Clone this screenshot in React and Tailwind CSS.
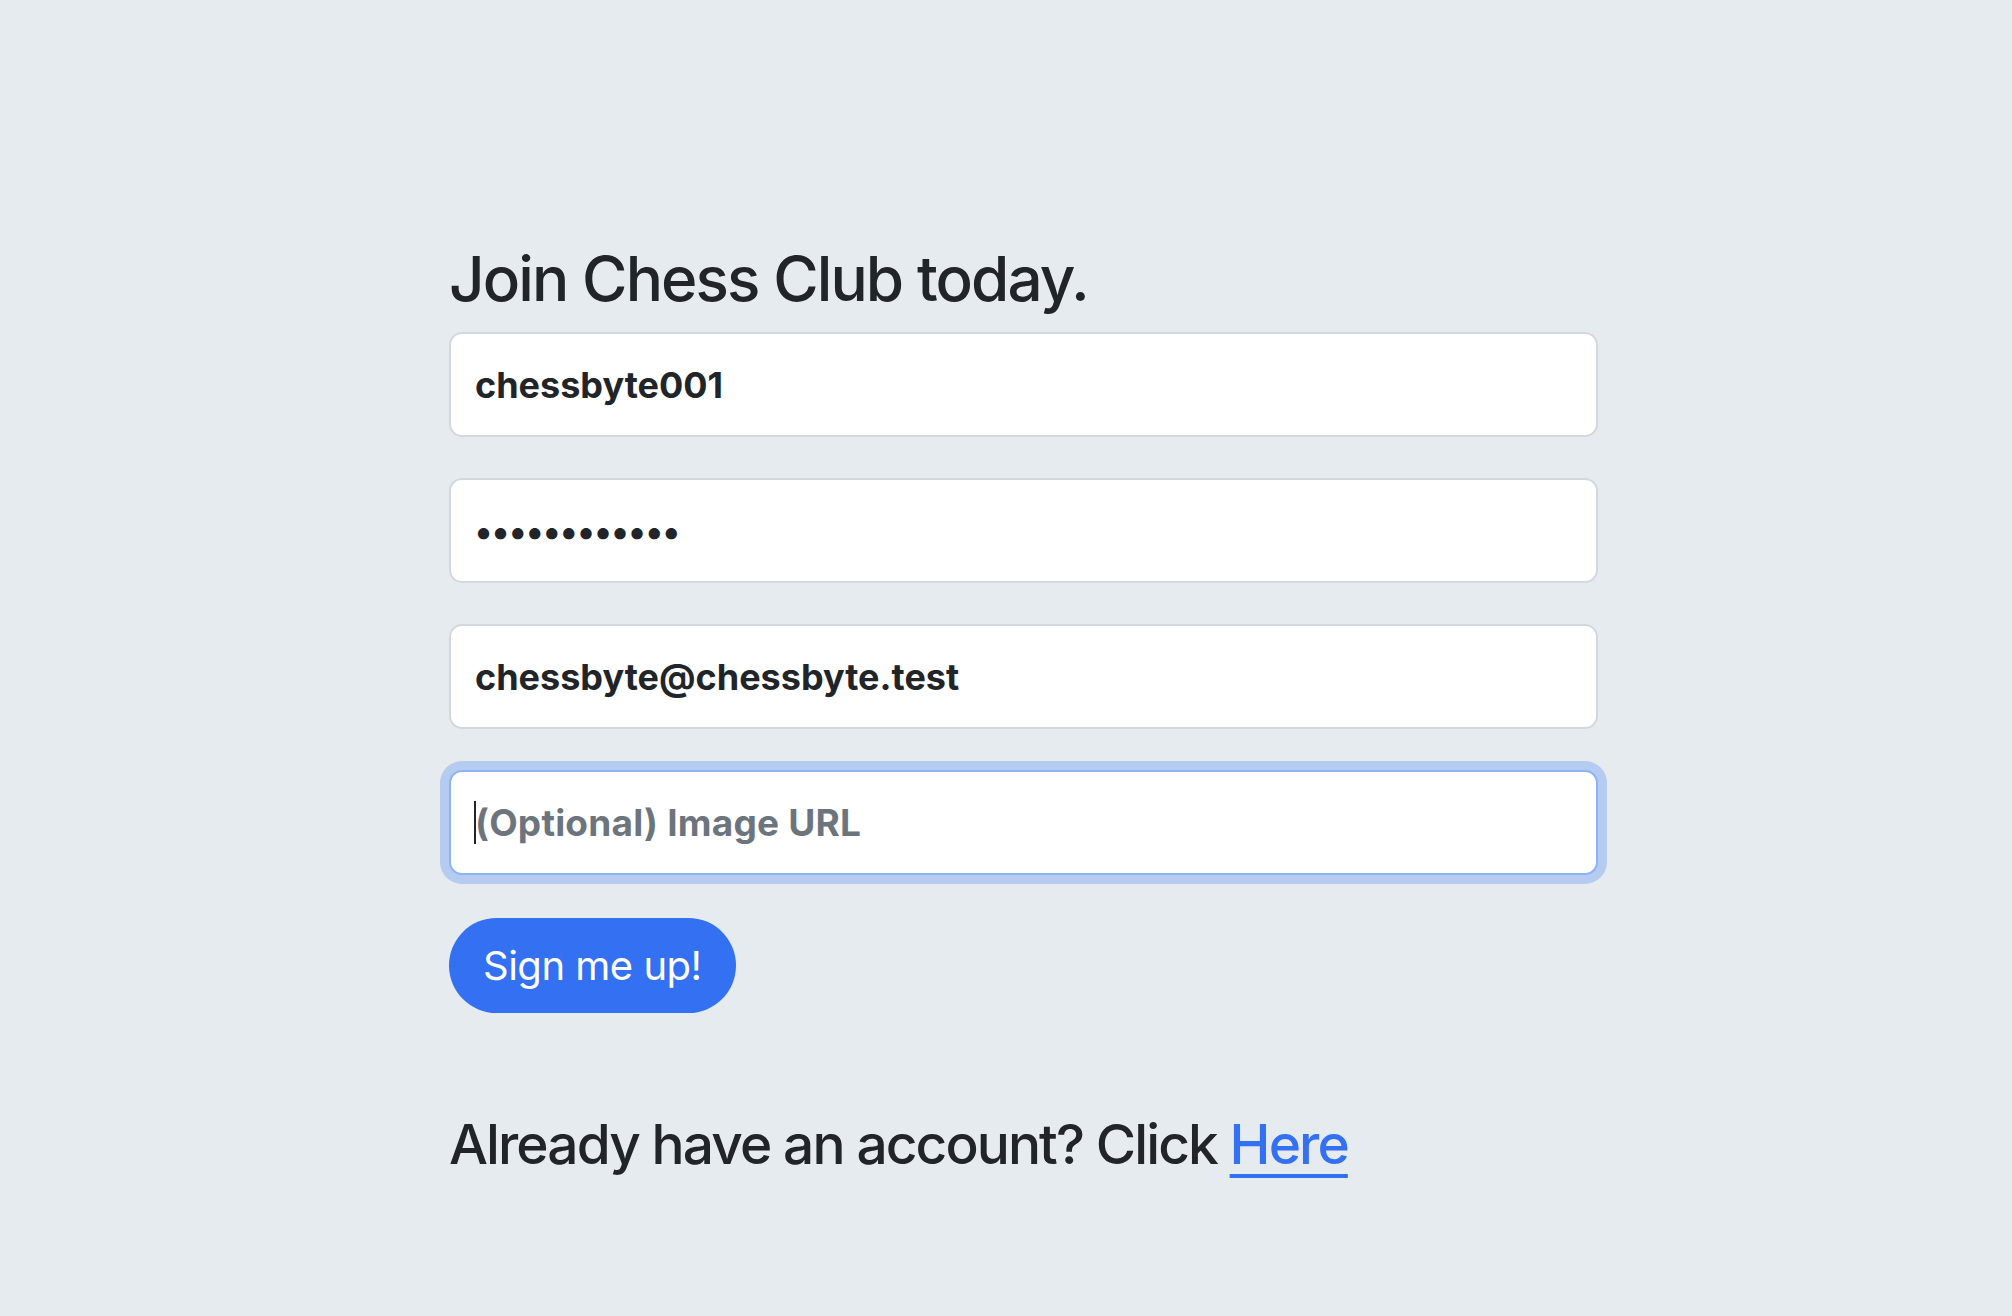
export default function App() {
	const field =
		"w-full h-[105px] px-[24px] bg-white border-2 border-[#d3d8de] rounded-[13px] text-[36px] font-bold text-[#212529] outline-none placeholder:text-[#6c757d]";

	return (
		<div
			className="min-h-screen bg-[#e6ebf0] pt-[242px] pl-[449px]"
			style={{ fontFamily: "Inter, 'Liberation Sans', sans-serif" }}
		>
			<form className="w-[1149px] flex flex-col" onSubmit={(e) => e.preventDefault()}>
				<h2 className="text-[62px] font-medium leading-[1.2] tracking-[-1.9px] text-[#212529] mb-[16px]">
					Join Chess Club today.
				</h2>
				<input className={field} type="text" name="username" defaultValue="chessbyte001" />
				<input
					className={field + " mt-[41px] tracking-[0px]"}
					type="password"
					name="password"
					defaultValue="chessbyte01!"
				/>
				<input
					className={field + " mt-[41px]"}
					type="email"
					name="email"
					defaultValue="chessbyte@chessbyte.test"
				/>
				<div className="relative mt-[41px]">
					<input
						className="w-full h-[105px] px-[24px] bg-white border-2 border-[#8bb4f8] rounded-[13px] text-[37px] font-bold tracking-[0.2px] text-[#212529] outline-none ring-[9px] ring-[#b6cbf0] placeholder:text-[#6c757d]"
						type="text"
						name="image_url"
						placeholder="(Optional) Image URL"
					/>
					<span className="absolute left-[25px] top-[31px] w-[2px] h-[43px] bg-[#212529]" />
				</div>
				<div className="mt-[43px]">
					<button className="h-[95px] px-[34px] rounded-full bg-[#3470f2] text-white text-[40px] tracking-[-0.5px]">
						Sign me up!
					</button>
				</div>
				<p className="mt-[90px] text-[55px] font-medium tracking-[-1.9px] text-[#212529]">
					Already have an account? Click{" "}
					<a href="#" className="text-[#3470f2] underline decoration-[4px] underline-offset-[10px]">
						Here
					</a>
				</p>
			</form>
		</div>
	);
}
